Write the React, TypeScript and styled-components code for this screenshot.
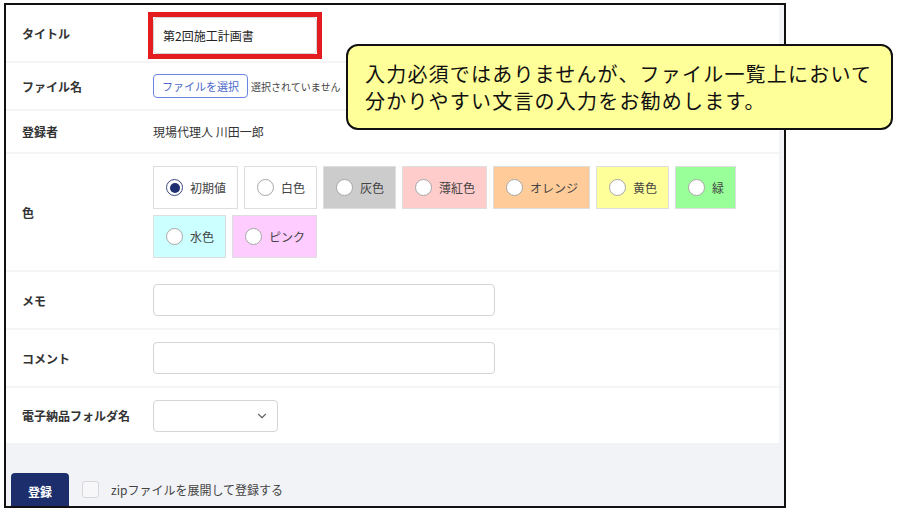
import React from 'react'
import styled, { createGlobalStyle } from 'styled-components'
import { ChevronDown } from 'lucide-react'

const GlobalStyle = createGlobalStyle`
    body {
        margin: 0;
        background: #ffffff;
        font-family: "Noto Sans CJK JP", "Noto Sans", sans-serif;
        color: #333;
    }
    * { box-sizing: border-box; }
`

const Page = styled.div`
    position: relative;
    width: 897px;
    height: 510px;
    padding: 3px 0 0 4px;
`

const Frame = styled.div`
    width: 782px;
    height: 505px;
    border: 2px solid #111;
    background: #f2f3f7;
    overflow: hidden;
    display: flex;
    flex-direction: column;
`

const Card = styled.div`
    background: #fff;
    margin-right: 5px;
    display: flex;
    flex-direction: column;
`

const Row = styled.div<{ $height: number }>`
    display: flex;
    align-items: center;
    height: ${p => p.$height}px;
    padding-left: 16px;
    & + & {
        border-top: 2px solid #f5f5f7;
    }
`

const Label = styled.div`
    width: 131px;
    flex-shrink: 0;
    font-size: 12px;
    font-weight: 700;
    color: #333;
`

const Value = styled.div`
    font-size: 12px;
    color: #333;
    display: flex;
    align-items: center;
`

const Highlight = styled.div`
    border: 5px solid #e21c1f;
    margin-left: -5px;
    margin-top: 4px;
`

const TextInput = styled.div<{ $width: number; $height: number }>`
    width: ${p => p.$width}px;
    height: ${p => p.$height}px;
    border: 1px solid #d4d4d8;
    border-radius: 4px;
    background: #fff;
    display: flex;
    align-items: center;
    padding: 0 9px;
    font-size: 12px;
    color: #222;
`

const FileButton = styled.div`
    height: 24px;
    padding: 0 8px;
    border: 1px solid #6b86e0;
    border-radius: 4px;
    color: #4b68c9;
    font-size: 11px;
    display: flex;
    align-items: center;
`

const FileNote = styled.span`
    font-size: 10px;
    color: #444;
    margin-left: 3px;
`

const Swatches = styled.div`
    display: flex;
    flex-wrap: wrap;
    gap: 6px;
    width: 600px;
`

const Swatch = styled.div<{ $bg: string }>`
    height: 43px;
    padding: 0 11px 0 12px;
    background: ${p => p.$bg};
    border: 1px solid #dedede;
    display: flex;
    align-items: center;
    gap: 7px;
    font-size: 12px;
    color: #444;
`

const Radio = styled.span<{ $checked?: boolean }>`
    width: 17px;
    height: 17px;
    border-radius: 50%;
    background: #fff;
    border: 1px solid ${p => (p.$checked ? '#3b4a80' : '#a6a6a6')};
    display: flex;
    align-items: center;
    justify-content: center;
    &::after {
        content: '';
        width: 10px;
        height: 10px;
        border-radius: 50%;
        background: ${p => (p.$checked ? '#1d2f6f' : 'transparent')};
    }
`

const Select = styled.div`
    width: 125px;
    height: 32px;
    border: 1px solid #d4d4d8;
    border-radius: 4px;
    background: #fff;
    display: flex;
    align-items: center;
    justify-content: flex-end;
    padding-right: 8px;
    color: #666;
`

const Footer = styled.div`
    display: flex;
    align-items: flex-start;
    padding: 30px 0 0 5px;
`

const SubmitButton = styled.div`
    width: 58px;
    height: 36px;
    background: #1c2f6c;
    border-radius: 4px;
    color: #fff;
    font-weight: 700;
    font-size: 12px;
    display: flex;
    align-items: center;
    justify-content: center;
`

const CheckLabel = styled.div`
    display: flex;
    align-items: center;
    gap: 12px;
    margin: 8px 0 0 13px;
    font-size: 12px;
    color: #444;
`

const CheckBox = styled.span`
    width: 17px;
    height: 17px;
    border: 1px solid #d8d8dc;
    border-radius: 3px;
    background: #f7f7f9;
`

const Callout = styled.div`
    position: absolute;
    left: 346px;
    top: 44px;
    width: 547px;
    height: 86px;
    border: 2px solid #111;
    border-radius: 12px;
    background: #ffff99;
    padding: 14px 0 0 17px;
    font-size: 20px;
    line-height: 27px;
    letter-spacing: 1.2px;
    color: #111;
`

const colors = [
    { name: '初期値', bg: '#ffffff', checked: true },
    { name: '白色', bg: '#ffffff' },
    { name: '灰色', bg: '#cccccc' },
    { name: '薄紅色', bg: '#ffcccc' },
    { name: 'オレンジ', bg: '#ffcc99' },
    { name: '黄色', bg: '#ffff99' },
    { name: '緑', bg: '#99ff99' },
    { name: '水色', bg: '#ccffff' },
    { name: 'ピンク', bg: '#ffccff' },
]

const App: React.FC = () => {
    return (
        <Page>
            <GlobalStyle />
            <Frame>
                <Card>
                    <Row $height={56}>
                        <Label>タイトル</Label>
                        <Highlight>
                            <TextInput $width={164} $height={37}>第2回施工計画書</TextInput>
                        </Highlight>
                    </Row>
                    <Row $height={48}>
                        <Label>ファイル名</Label>
                        <Value>
                            <FileButton>ファイルを選択</FileButton>
                            <FileNote>選択されていません</FileNote>
                        </Value>
                    </Row>
                    <Row $height={43}>
                        <Label>登録者</Label>
                        <Value>現場代理人 川田一郎</Value>
                    </Row>
                    <Row $height={118}>
                        <Label>色</Label>
                        <Swatches>
                            {colors.map(c => (
                                <Swatch $bg={c.bg} key={c.name}>
                                    <Radio $checked={c.checked} />
                                    {c.name}
                                </Swatch>
                            ))}
                        </Swatches>
                    </Row>
                    <Row $height={58}>
                        <Label>メモ</Label>
                        <TextInput $width={342} $height={32} />
                    </Row>
                    <Row $height={58}>
                        <Label>コメント</Label>
                        <TextInput $width={342} $height={32} />
                    </Row>
                    <Row $height={57}>
                        <Label>電子納品フォルダ名</Label>
                        <Select>
                            <ChevronDown size={14} strokeWidth={2} />
                        </Select>
                    </Row>
                </Card>
                <Footer>
                    <SubmitButton>登録</SubmitButton>
                    <CheckLabel>
                        <CheckBox />
                        zipファイルを展開して登録する
                    </CheckLabel>
                </Footer>
            </Frame>
            <Callout>
                入力必須ではありませんが、ファイル一覧上において
                <br />
                分かりやすい文言の入力をお勧めします。
            </Callout>
        </Page>
    )
}

export default App
